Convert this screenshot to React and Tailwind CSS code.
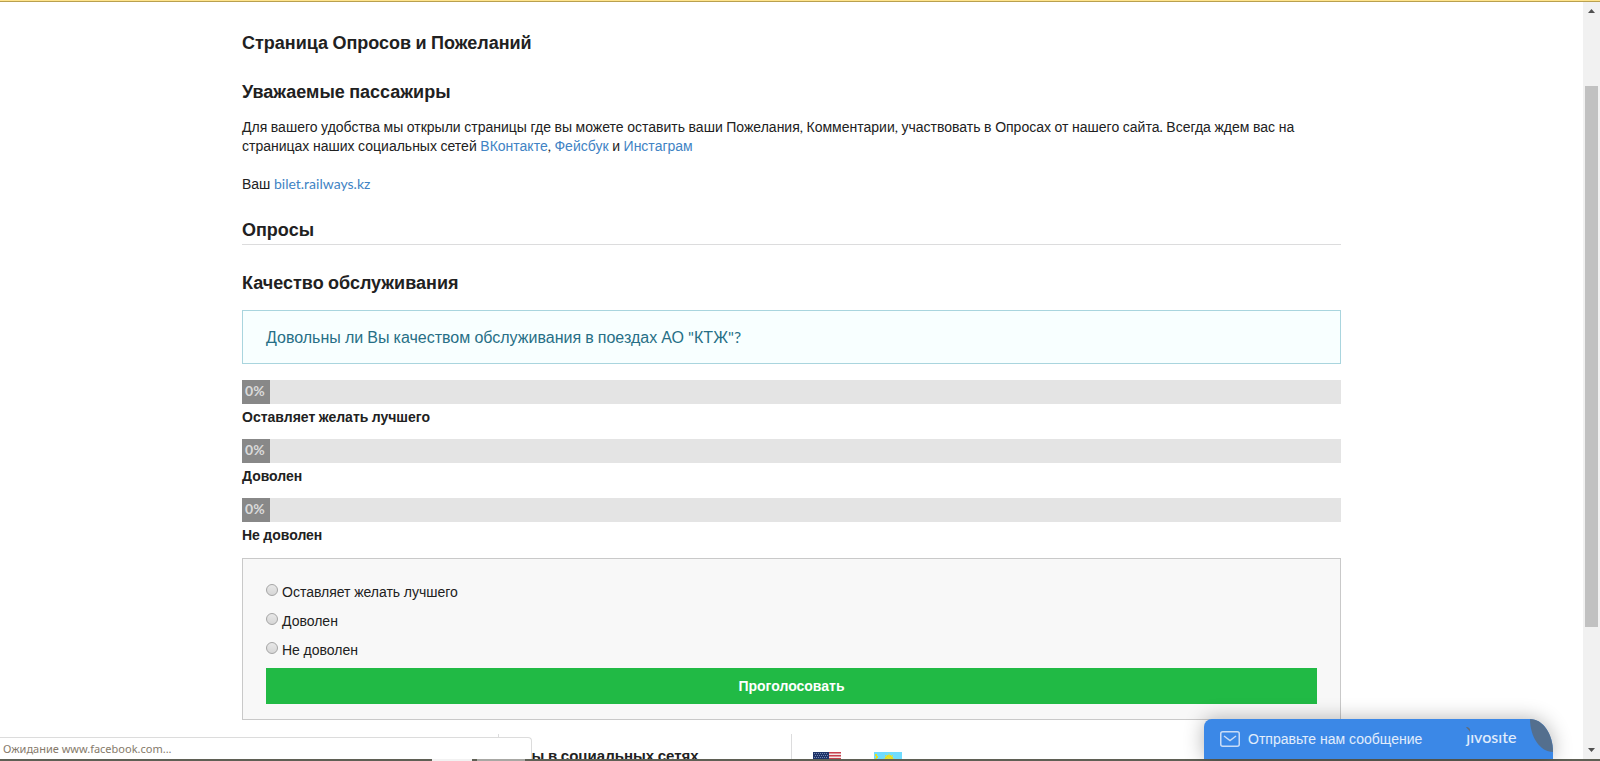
import { useState } from "react";

const options = [
  { id: "bad", label: "Оставляет желать лучшего", percent: 0 },
  { id: "good", label: "Доволен", percent: 0 },
  { id: "notgood", label: "Не доволен", percent: 0 },
];

// Cyrillic goes in Liberation Sans, everything else (spaces too) in Lato
function T({ children }) {
  return children.split(/([\u0400-\u04FF]+)/).map((part, i) =>
    i % 2 ? (
      <span key={i} className="font-['Liberation_Sans',Arial,sans-serif] leading-none">
        {part}
      </span>
    ) : (
      part
    )
  );
}

function Intro() {
  return (
    <section>
      <h1 className="pt-[26px] text-lg leading-7 font-bold">
        <T>Страница Опросов и Пожеланий</T>
      </h1>
      <h2 className="mt-[21px] text-lg leading-7 font-bold">
        <T>Уважаемые пассажиры</T>
      </h2>
      <p className="mt-3 leading-[19px]">
        <T>
          Для вашего удобства мы открыли страницы где вы можете оставить ваши Пожелания, Комментарии, участвовать в Опросах от нашего сайта. Всегда ждем вас на страницах наших социальных сетей
        </T>{" "}
        <a href="#vk" className="text-[#4183c4]"><T>ВКонтакте</T></a>,{" "}
        <a href="#fb" className="text-[#4183c4]"><T>Фейсбук</T></a> <T>и</T>{" "}
        <a href="#insta" className="text-[#4183c4]"><T>Инстаграм</T></a>
      </p>
      <p className="mt-[19px] leading-[19px]">
        <T>Ваш </T>
        <a href="#bilet" className="text-[#4183c4]">bilet.railways.kz</a>
      </p>
    </section>
  );
}

function ResultBar({ label, percent }) {
  return (
    <div className="mb-3">
      <div className="h-6 bg-[#e4e4e4]">
        <div
          className="h-6 min-w-7 bg-[#888] pl-[3px] leading-[22px] font-bold text-white/70"
          style={{ width: `${percent}%` }}
        >
          {percent}%
        </div>
      </div>
      <div className="pt-[3px] leading-5 font-bold"><T>{label}</T></div>
    </div>
  );
}

function VoteForm() {
  const [vote, setVote] = useState("");

  return (
    <form
      onSubmit={(e) => e.preventDefault()}
      className="mt-[13px] border border-[#c9c9c9] bg-[#f8f8f8] px-[23px] pt-[18px] pb-[15px]"
    >
      {options.map((o) => (
        <label key={o.id} className="flex h-[29px] items-center gap-1">
          <input
            type="radio"
            name="vote"
            value={o.id}
            checked={vote === o.id}
            onChange={() => setVote(o.id)}
            className="mb-1 size-3 appearance-none rounded-full border border-[#a5a5a5] bg-linear-to-b from-[#e8e8e8] to-[#d6d6d6] checked:bg-[#777]"
          />
          <span><T>{o.label}</T></span>
        </label>
      ))}
      <button type="submit" className="mt-1 block h-9 w-full cursor-pointer bg-[#21ba45] font-bold text-white">
        <T>Проголосовать</T>
      </button>
    </form>
  );
}

function Footer() {
  return (
    <footer className="mt-[14px] flex h-24">
      <div className="w-[257px] shrink-0 border-r border-[#dcdcdd]" />
      <div className="w-[293px] shrink-0 border-r border-[#dcdcdd] pt-[11px] pl-5 text-[15px] leading-5 font-bold">
        <T>Мы в социальных сетях</T>
      </div>
      <div className="flex gap-[33px] pt-[18px] pl-[21px]">
        <button type="button" aria-label="English" className="h-5 w-7">
          <svg viewBox="0 0 28 20" width="28" height="20">
            <rect width="28" height="20" fill="#f3e9e9" />
            {[0, 3, 6, 9, 12, 15, 18].map((y) => (
              <rect key={y} y={y} width="28" height="1.500" fill="#c8404e" />
            ))}
            <rect width="16" height="11" fill="#1f3468" />
            {[1, 3, 5, 7, 9].map((y) =>
              [1, 3, 5, 7, 9, 11, 13].map((x) => (
                <rect key={`${x}_${y}`} x={x + (y % 4 === 1 ? 0 : 1)} y={y} width="1" height="1" fill="#7486b0" />
              ))
            )}
          </svg>
        </button>
        <button type="button" aria-label="Қазақша" className="h-5 w-7">
          <svg viewBox="0 0 28 20" width="28" height="20">
            <rect width="28" height="20" fill="#6fdcff" />
            <path d="M1 2h2v2H1zM2 4h2v2H2zM1 6h2v2H1z" fill="#e8e020" />
            <circle cx="15" cy="7" r="4" fill="#f5dd08" />
            <path d="M15 1.500v11M9.500 7h11M11 3l8 8M19 3l-8 8" stroke="#d6e04a" />
          </svg>
        </button>
      </div>
    </footer>
  );
}

function ChatWidget() {
  return (
    <button
      type="button"
      className="absolute right-[47px] bottom-0 flex h-10 w-[349px] items-center rounded-tl-lg rounded-tr-[23px_33px] bg-[#3b88e7] pl-4 text-left text-white/85 shadow-[0_0_20px_rgba(0,0,0,0.3)]"
    >
      <svg viewBox="0 0 20 16" width="20" height="16" fill="none" stroke="#c9dcf7" strokeWidth="1.500">
        <rect x="0.750" y="0.750" width="18.500" height="14.500" rx="2" />
        <path d="M4 5l6 4.500L16 5" />
      </svg>
      <span className="ml-2 font-['Liberation_Sans',Arial,sans-serif] text-sm whitespace-nowrap">
        Отправьте нам сообщение
      </span>
      <span className="relative mb-1 ml-11 text-base leading-5 font-medium">
        ȷıvosıte
        <svg viewBox="0 0 5 6" width="5" height="6" className="absolute top-0 left-0">
          <path d="M0 0c3 0 5 2 4 6C4 3 2 3 0 0z" fill="#5f6b7a" />
        </svg>
      </span>
      <svg viewBox="0 0 23 33" width="23" height="33" className="absolute top-0 right-0">
        <path d="M0 0C12.700 0 23 14.800 23 33C10.300 33 0 18.200 0 0z" fill="#546f8e" />
      </svg>
    </button>
  );
}

function ScrollBar() {
  return (
    <div className="flex w-[17px] shrink-0 flex-col items-center bg-[#f1f1f1]">
      <svg viewBox="0 0 7 4" width="7" height="4" className="mt-[7px]">
        <path d="M0 4L3.500 0L7 4z" fill="#505050" />
      </svg>
      <div className="mt-[73px] w-[13px] basis-[541px] bg-[#c1c1c1]" />
      <svg viewBox="0 0 7 4" width="7" height="4" className="mt-auto mb-[7px]">
        <path d="M0 0L3.500 4L7 0z" fill="#505050" />
      </svg>
    </div>
  );
}

export default function App() {
  return (
    <div className="flex h-screen flex-col overflow-hidden bg-white font-[Lato,'Liberation_Sans',sans-serif] text-sm text-[#212121]">
      <div className="h-[2px] shrink-0 border-b border-[#b9a04f] bg-[#ffe48d]" />
      <div className="relative flex min-h-0 flex-1">
        <div className="min-w-0 flex-1 overflow-hidden">
          <main className="mx-auto max-w-[1099px]">
            <Intro />
            <h2 className="mt-[22px] border-b border-[#dcdcdd] pb-px text-lg leading-7 font-bold">
              <T>Опросы</T>
            </h2>
            <h3 className="mt-[23px] text-lg leading-7 font-bold">
              <T>Качество обслуживания</T>
            </h3>
            <div className="mt-[14px] mb-4 border border-[#a9d5de] bg-[#f8ffff] px-[23px] py-[14px] text-base text-[#276f86]">
              <T>Довольны ли Вы качеством обслуживания в поездах АО "КТЖ"?</T>
            </div>
            {options.map((o) => (
              <ResultBar key={o.id} label={o.label} percent={o.percent} />
            ))}
            <VoteForm />
            <Footer />
          </main>
        </div>
        <ScrollBar />
        <div className="absolute bottom-0 left-0 h-[22px] w-[532px] rounded-tr border-t border-r border-[#dcdcdc] bg-white pl-[3px] font-['Noto_Sans',sans-serif] text-[11px] leading-[22px] text-[#85796a]">
          Ожидание www.facebook.com...
        </div>
        <ChatWidget />
      </div>
      <div className="flex h-[2px] shrink-0 bg-[#5f6055]">
        <div className="w-[45px] bg-[#5f6055]" />
        <div className="ml-[387px] w-10 bg-[#f2f2f2]" />
        <div className="ml-[5px] w-12 bg-[#a8a8a4]" />
      </div>
    </div>
  );
}
